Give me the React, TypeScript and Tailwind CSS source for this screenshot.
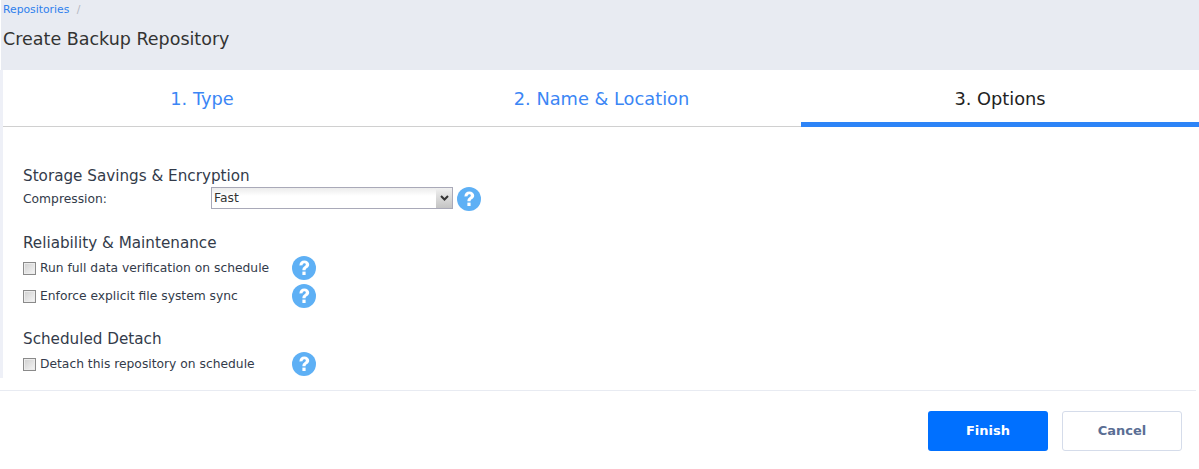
import React from 'react';

const font = "font-['DejaVu_Sans',sans-serif]";

function HelpIcon() {
  return (
    <svg width="24" height="24" viewBox="0 0 24 24" className="shrink-0">
      <circle cx="12" cy="12" r="12" fill="#5eb0f5" />
      <path d="M7.4 9.4C7.6 6.2 9.5 4.4 12.3 4.4c2.8 0 4.9 1.7 4.9 4 0 1.7-.9 2.7-2.2 3.6-1.1.8-1.4 1.2-1.4 2.3h-3.2c0-2 .5-3 1.9-3.9 1-.7 1.5-1.1 1.5-1.8 0-.8-.6-1.3-1.5-1.3-1 0-1.6.7-1.7 1.9z" fill="#fff" />
      <rect x="10.4" y="15.6" width="3.2" height="3.4" fill="#fff" />
    </svg>
  );
}

function Check({ label }: { label: string }) {
  return (
    <div className="flex items-center h-6">
      <span className="w-[269px] flex items-center">
        <span className="w-[13px] h-[13px] mr-1 border border-[#8a8a8a] bg-gradient-to-br from-[#cfcfcf] to-[#f6f6f6] shadow-[inset_0_0_0_1px_#ececec]" />
        <span className="text-[12.3px] text-[#333b4a]">{label}</span>
      </span>
      <HelpIcon />
    </div>
  );
}

export default function App() {
  return (
    <div className={`w-[1199px] h-[469px] bg-white overflow-hidden ${font}`}>
      <div className="h-[70px] ml-px bg-[#e8ebf2] pl-0.5">
        <div className="text-[10.8px] leading-5 h-[18px] text-[#2f80ed]">
          Repositories <span className="ml-1 text-[#b5b9c2]">/</span>
        </div>
        <h1 className="mt-[9px] text-[17.5px] leading-6 text-[#333]">Create Backup Repository</h1>
      </div>

      <div className="h-[308px] border-l-[3px] border-[#eef0f7]">
        <div className="flex h-[57px] border-b border-[#d0d0d0] text-[17.8px]">
          <div className="w-[399px] pt-4 pr-px text-center text-[#3b86f5]">1. Type</div>
          <div className="w-[399px] pt-4 text-center text-[#3b86f5]">2. Name &amp; Location</div>
          <div className="flex-1 pt-4 text-center text-[#222] border-b-[5px] border-[#2d84f7] h-[57px]">3. Options</div>
        </div>

        <div className="pl-5 pt-[38px]">
          <h2 className="h-5 text-[15.2px] leading-[22px] text-[#333b4a]">Storage Savings &amp; Encryption</h2>
          <div className="flex items-center mt-0.5 h-6">
            <span className="w-[188px] text-[12.3px] text-[#333b4a]">Compression:</span>
            <div className="relative w-[242px] h-[22px] -mt-0.5">
              <select className="appearance-none block w-full h-full border border-[#a9a9b8] text-[12.3px] text-[#333] pl-[2px] bg-gradient-to-b from-[#ececec] to-white to-40%">
                <option>Fast</option>
              </select>
              <span className="absolute right-px top-px bottom-px w-4 flex items-center justify-center bg-gradient-to-b from-[#f0f0f0] to-[#c4c4c4]">
                <svg width="9" height="6" viewBox="0 0 9 6"><path d="M1 1l3.5 3.5L8 1" fill="none" stroke="#333" strokeWidth="2" /></svg>
              </span>
            </div>
            <span className="ml-1"><HelpIcon /></span>
          </div>

          <h2 className="mt-[21px] h-5 text-[15.2px] leading-[22px] text-[#333b4a]">Reliability &amp; Maintenance</h2>
          <div className="mt-1 flex flex-col gap-1">
            <Check label="Run full data verification on schedule" />
            <Check label="Enforce explicit file system sync" />
          </div>

          <h2 className="mt-5 h-5 text-[15.2px] leading-[22px] text-[#333b4a]">Scheduled Detach</h2>
          <div className="mt-1">
            <Check label="Detach this repository on schedule" />
          </div>
        </div>
      </div>

      <div className="mt-3 mr-[3px] border-t border-[#e8ebf2] h-[79px] flex justify-end items-start pt-5 pr-[14px] gap-3.5">
        <button className="w-[120px] h-10 rounded-[3px] bg-[#0070ff] text-white text-[13px] font-bold">Finish</button>
        <button className="w-[120px] h-10 rounded-[3px] bg-white border border-[#d5dcea] text-[#5a6e94] text-[13px] font-bold">Cancel</button>
      </div>
    </div>
  );
}
